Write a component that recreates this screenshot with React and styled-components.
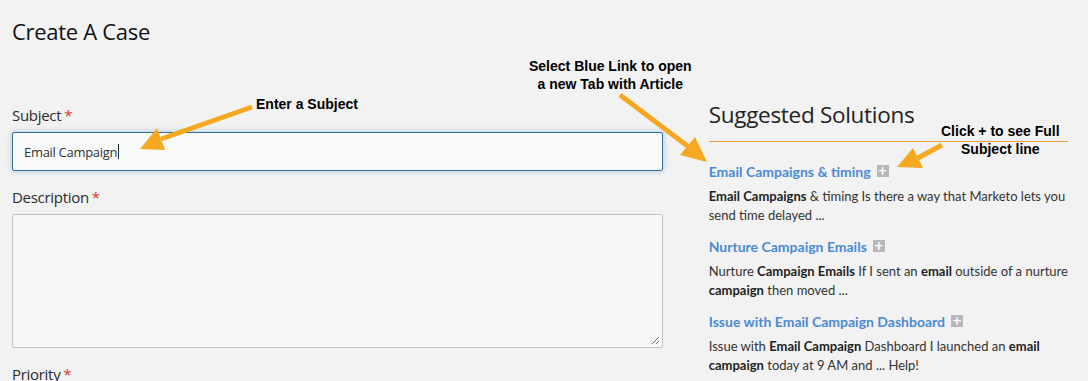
import React from "react";
import styled, { createGlobalStyle } from "styled-components";

const GlobalStyle = createGlobalStyle`
  html, body {
    margin: 0;
    padding: 0;
    background: #f2f2f2;
  }
  body {
    font-family: "Open Sans", "Noto Sans", sans-serif;
    color: #222;
  }
`;

const Page = styled.div`
  position: relative;
  width: 1088px;
  height: 381px;
  overflow: hidden;
  background: #f2f2f2;
  box-sizing: border-box;
  padding: 16px 20px 0 12px;
  display: flex;
  gap: 46px;
`;

const FormColumn = styled.div`
  width: 652px;
  display: flex;
  flex-direction: column;
`;

const Title = styled.h1`
  margin: 0 0 59px;
  font-family: "Open Sans", sans-serif;
  font-weight: 400;
  font-size: 22px;
  letter-spacing: -0.3px;
  line-height: 30px;
  color: #111;
`;

const Label = styled.label`
  display: block;
  font-family: "Open Sans", sans-serif;
  font-size: 15px;
  letter-spacing: -0.3px;
  line-height: 20px;
  color: #2b2b2b;
  margin-bottom: 7px;
`;

const Required = styled.span`
  color: #e0332f;
  margin-left: 3px;
`;

const Field = styled.div`
  margin-bottom: ${(p) => p.$gap || 16}px;
`;

const SubjectBox = styled.div`
  height: 39px;
  box-sizing: border-box;
  border: 1px solid #2f6fa8;
  border-radius: 2px;
  background: #f8f9f9;
  box-shadow: 0 0 6px rgba(47, 111, 168, 0.35);
  display: flex;
  align-items: center;
  padding-left: 11px;
  font-family: "Open Sans", sans-serif;
  font-size: 13px;
  letter-spacing: -0.3px;
  color: #333;
`;

const Caret = styled.span`
  display: inline-block;
  width: 1px;
  height: 15px;
  background: #222;
  margin-left: 1px;
`;

const TextArea = styled.div`
  position: relative;
  height: 134px;
  box-sizing: border-box;
  border: 1px solid #c4c4c4;
  border-radius: 2px;
  background: #f7f7f7;
`;

const Grip = styled.svg`
  position: absolute;
  right: 2px;
  bottom: 2px;
`;

const SideColumn = styled.div`
  width: 360px;
  display: flex;
  flex-direction: column;
  padding-top: 84px;
  font-family: "Lato", sans-serif;
`;

const SideTitle = styled.h2`
  margin: 0;
  font-family: "Open Sans", sans-serif;
  font-weight: 400;
  font-size: 22.5px;
  letter-spacing: -0.3px;
  line-height: 30px;
  color: #222;
  padding-bottom: 11px;
  border-bottom: 1px solid #ee9a3c;
  margin-bottom: 21px;
`;

const Solution = styled.div`
  margin-bottom: 13px;
`;

const SolutionLink = styled.a`
  display: flex;
  align-items: center;
  gap: 6px;
  font-size: 14px;
  font-weight: 700;
  color: #4a8ad4;
  text-decoration: none;
  line-height: 18px;
  margin-bottom: 6px;
`;

const PlusBox = styled.span`
  width: 12px;
  height: 12px;
  background: #b8b8b8;
  color: #fff;
  font-size: 12px;
  line-height: 12px;
  text-align: center;
  font-weight: 700;
  font-family: "DejaVu Sans", sans-serif;
  margin-top: -2px;
`;

const Snippet = styled.p`
  margin: 0;
  font-size: 13px;
  line-height: 19px;
  color: #333;

  b {
    font-weight: 700;
    color: #222;
  }
`;

const Note = styled.div`
  position: absolute;
  left: ${(p) => p.$x}px;
  top: ${(p) => p.$y}px;
  font-family: "Liberation Sans", Arial, sans-serif;
  font-weight: 700;
  font-size: 14px;
  line-height: 18px;
  color: #000;
  text-align: center;
  white-space: nowrap;
`;

const Arrows = styled.svg`
  position: absolute;
  left: 0;
  top: 0;
  pointer-events: none;
`;

const solutions = [
  {
    title: "Email Campaigns & timing",
    body: (
      <>
        <b>Email Campaigns</b> & timing Is there a way that Marketo lets you
        send time delayed ...
      </>
    ),
  },
  {
    title: "Nurture Campaign Emails",
    body: (
      <>
        Nurture <b>Campaign Emails</b> If I sent an <b>email</b> outside of a
        nurture <b>campaign</b> then moved ...
      </>
    ),
  },
  {
    title: "Issue with Email Campaign Dashboard",
    body: (
      <>
        Issue with <b>Email Campaign</b> Dashboard I launched an <b>email</b>{" "}
        <b>campaign</b> today at 9 AM and ... Help!
      </>
    ),
  },
];

const Arrow = ({ from, to, w1, w2 }) => (
  <g>
    <line
      x1={from[0]}
      y1={from[1]}
      x2={(w1[0] + w2[0]) / 2}
      y2={(w1[1] + w2[1]) / 2}
      stroke="#f6a821"
      strokeWidth="5"
      strokeLinecap="butt"
    />
    <polygon
      points={`${to[0]},${to[1]} ${w1[0]},${w1[1]} ${w2[0]},${w2[1]}`}
      fill="#f6a821"
    />
  </g>
);

export default function App() {
  return (
    <>
      <GlobalStyle />
      <Page>
        <FormColumn>
          <Title>Create A Case</Title>
          <Field $gap={16}>
            <Label>
              Subject<Required>*</Required>
            </Label>
            <SubjectBox>
              Email Campaign
              <Caret />
            </SubjectBox>
          </Field>
          <Field $gap={16}>
            <Label>
              Description<Required>*</Required>
            </Label>
            <TextArea>
              <Grip width="10" height="10" viewBox="0 0 10 10">
                <line x1="9" y1="2" x2="2" y2="9" stroke="#777" strokeWidth="1" />
                <line x1="9" y1="6" x2="6" y2="9" stroke="#777" strokeWidth="1" />
              </Grip>
            </TextArea>
          </Field>
          <Field>
            <Label>
              Priority<Required>*</Required>
            </Label>
          </Field>
        </FormColumn>

        <SideColumn>
          <SideTitle>Suggested Solutions</SideTitle>
          {solutions.map((s) => (
            <Solution key={s.title}>
              <SolutionLink href="#">
                {s.title}
                <PlusBox>+</PlusBox>
              </SolutionLink>
              <Snippet>{s.body}</Snippet>
            </Solution>
          ))}
        </SideColumn>

        <Note $x={256} $y={95}>Enter a Subject</Note>
        <Note $x={529} $y={57}>
          Select Blue Link to open
          <br />a new Tab with Article
        </Note>
        <Note $x={941} $y={122}>
          Click + to see Full
          <br />
          Subject line
        </Note>

        <Arrows width="1088" height="381" viewBox="0 0 1088 381">
          <Arrow from={[252, 107]} to={[140, 149]} w1={[157, 128]} w2={[165, 150]} />
          <Arrow from={[620, 95]} to={[707, 162]} w1={[695, 137]} w2={[680, 155]} />
          <Arrow from={[942, 145]} to={[897, 167]} w1={[913, 148]} w2={[923, 168]} />
        </Arrows>
      </Page>
    </>
  );
}
